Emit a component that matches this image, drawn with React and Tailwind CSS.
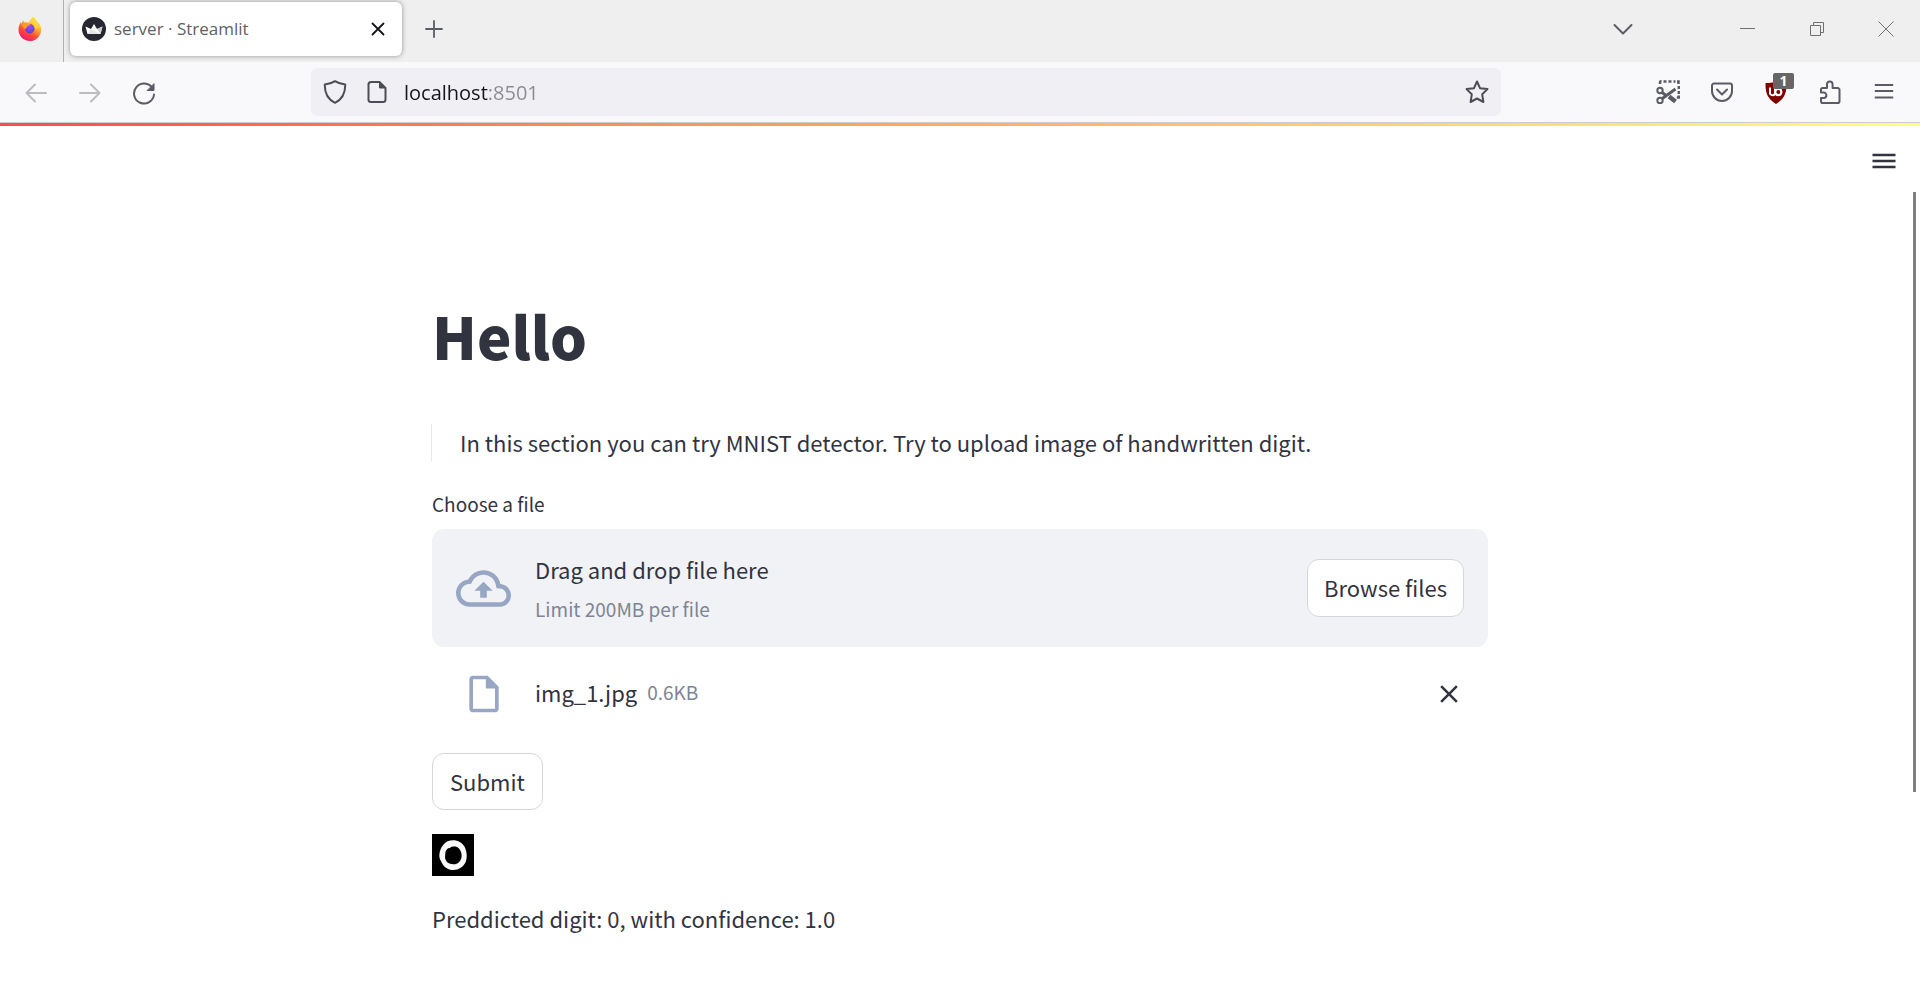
import React from "react";
import { MdOutlineCloudUpload, MdOutlineInsertDriveFile, MdClose } from "react-icons/md";

function FirefoxLogo() {
  return (
    <svg className="h-6 w-6" viewBox="0 0 24 24" aria-hidden="true">
      <defs>
        <linearGradient id="ff-body" x1="0.8" y1="0.1" x2="0.3" y2="1">
          <stop offset="0" stopColor="#fff044" />
          <stop offset="0.35" stopColor="#ffa930" />
          <stop offset="0.65" stopColor="#ff4a3c" />
          <stop offset="1" stopColor="#f5156c" />
        </linearGradient>
        <radialGradient id="ff-globe" cx="0.5" cy="0.3" r="0.7">
          <stop offset="0" stopColor="#a04cf5" />
          <stop offset="1" stopColor="#5b3fd0" />
        </radialGradient>
      </defs>
      <path fill="url(#ff-body)" d="M15.2 0c1.700 1.200 2.700 2.700 3.300 4.100c3 1.800 4.700 5 4.700 8.500A11.400 11.400 0 0 1 11.800 24C5.500 24 .5 19 .5 12.800c0-3 .8-5.600 2.500-7.800l.5 2C4.200 5 4.600 4 5 3.200c.4 1 .9 1.700 1.700 2.300 1.600-.4 3-.2 4.300.2C11.400 3.300 13.300 1.400 15.200 0z" />
      <circle cx="11.8" cy="11.7" r="4.7" fill="url(#ff-globe)" />
      <path fill="#ff9a2b" d="M4 7.500c2-1.600 4.500-1.900 6.500-.9l2 .9c-1 1.200-2.300 1.500-3.200 1.800-.5 1.300-1.200 2.200-2.700 2.700-1.200-1.400-2-3-2.600-4.500z" />
      <path fill="#ffd43d" opacity=".8" d="M15.200 0c3.300 2.400 3.700 6.400 5.300 9.200-.7 2-1.600 2.800-3.700 1.900-.2-3.200-2.600-5.200-4.600-6.200.3-2 1.500-3.800 3-4.900z" />
    </svg>
  );
}

function CrownLogo() {
  return (
    <svg className="h-6 w-6" viewBox="0 0 24 24" aria-hidden="true">
      <circle cx="12" cy="12" r="12" fill="#262730" />
      <path fill="#fff" d="M3.5 9.500 9 12l3-5 3 5 5.500-2.500L18.500 17h-13z" />
      <path fill="#c9c9cc" d="M12 7l3 5 5.500-2.500L18.500 17z" />
      <path fill="#e4e4e6" d="M9 12l9.500 5h-13z" />
    </svg>
  );
}

function Line({ children, className = "h-6 w-6", width = 2 }) {
  return (
    <svg className={className} viewBox="0 0 24 24" fill="none" stroke="currentColor" strokeWidth={width} strokeLinecap="round" strokeLinejoin="round" aria-hidden="true">
      {children}
    </svg>
  );
}

function IconButton({ label, children, className = "text-[#5b5b66]" }) {
  return (
    <button type="button" aria-label={label} className={`flex h-12 w-[54px] items-center justify-center ${className}`}>
      {children}
    </button>
  );
}

function TabBar() {
  return (
    <header className="flex h-[62px] bg-[#efefef]">
      <div className="flex w-16 items-center justify-center border-r border-[#b0b0b3] pb-1 pr-1">
        <FirefoxLogo />
      </div>
      <div className="flex flex-1 items-center pb-1">
        <div className="ml-1.5 flex h-[54px] w-[332px] items-center rounded-md bg-white px-3 shadow-[0_0_5px_rgba(0,0,0,0.4)]">
          <CrownLogo />
          <span className="ml-2 flex-1 text-[17px] text-[#5f5f66]">server · Streamlit</span>
          <button type="button" aria-label="Close tab" className="flex h-6 w-6 items-center justify-center text-[#15141a]">
            <Line width={1.8}><path d="M6.500 6.500l11 11M17.500 6.500l-11 11" /></Line>
          </button>
        </div>
        <button type="button" aria-label="New tab" className="ml-5 flex h-6 w-6 items-center justify-center text-[#5b5b66]">
          <Line width={1.8}><path d="M12 4v16M4 12h16" /></Line>
        </button>
        <button type="button" aria-label="List all tabs" className="ml-auto mr-[63px] flex h-12 w-[54px] items-center justify-center text-[#5b5b66]">
          <Line><path d="M3.500 8l8.500 8.500L20.500 8" /></Line>
        </button>
        <div className="flex text-[#707070]">
          <button type="button" aria-label="Minimize" className="flex h-12 w-[69px] items-center justify-center">
            <svg className="h-4 w-4" viewBox="0 0 16 16" fill="none" stroke="currentColor" aria-hidden="true"><path d="M0 7.500h15" /></svg>
          </button>
          <button type="button" aria-label="Restore" className="flex h-12 w-[69px] items-center justify-center">
            <svg className="h-4 w-4" viewBox="0 0 16 16" fill="none" stroke="currentColor" aria-hidden="true"><path d="M1.500 4.500h10v10h-10zM4.500 4.500v-3h10v10h-3" /></svg>
          </button>
          <button type="button" aria-label="Close window" className="flex h-12 w-[69px] items-center justify-center">
            <svg className="h-4 w-4" viewBox="0 0 16 16" fill="none" stroke="currentColor" aria-hidden="true"><path d="M.5.5l15 15M15.500.5l-15 15" /></svg>
          </button>
        </div>
      </div>
    </header>
  );
}

function Toolbar() {
  return (
    <nav className="flex h-[61px] items-center border-b border-[#cccccf] bg-[#f9f9fb] px-[9px]" aria-label="Browser toolbar">
      <div className="flex pt-0.5">
        <IconButton label="Back" className="text-[#bcbcc0]">
          <Line><path d="M22 12H2.500M11 3.500L2.500 12l8.500 8.500" /></Line>
        </IconButton>
        <IconButton label="Forward" className="text-[#bcbcc0]">
          <Line><path d="M2 12h19.500M13 3.500l8.500 8.500-8.500 8.500" /></Line>
        </IconButton>
        <IconButton label="Reload">
          <Line><path d="M20.500 7.200A10 10 0 1 0 22 13.500" /><path d="M22 3v6.500h-6.500z" fill="currentColor" strokeWidth="1" /></Line>
        </IconButton>
      </div>
      <div className="mx-[140px] flex h-12 flex-1 items-center rounded-md bg-[#f0f0f4] px-3 text-[#4c4c55]">
        <Line><path d="M12 1.200C9 3.200 5.500 4.200 1.800 4.600c-.2 7.600 2.200 14.200 10.200 18.200 8-4 10.400-10.600 10.200-18.200C18.500 4.200 15 3.200 12 1.200z" /></Line>
        <Line className="ml-[18px] h-6 w-6"><path d="M14.500 2H6a2.500 2.500 0 0 0-2.500 2.500v15A2.500 2.500 0 0 0 6 22h12a2.500 2.500 0 0 0 2.500-2.500V8z" /><path d="M14.500 2v6h6z" fill="currentColor" strokeWidth="1" /></Line>
        <input
          aria-label="Address"
          type="text"
          defaultValue="localhost:8501"
          className="ml-[15px] h-8 flex-1 bg-linear-to-r from-[#15141a] from-[84px] to-[#8a8a90] to-[84px] bg-clip-text pt-0.5 text-[20px] leading-8 text-transparent outline-none"
        />
        <button type="button" aria-label="Bookmark this page" className="flex h-6 w-6 items-center justify-center">
          <Line><path d="M12 1.500l3 6.700 7.500.9-5.300 5.200 1.200 7.700L12 18.500 5.600 22l1.200-7.700L1.500 9.100 9 8.200z" /></Line>
        </button>
      </div>
      <div className="flex">
        <IconButton label="Screenshot">
          <svg className="h-6 w-6" viewBox="0 0 24 24" fill="none" stroke="currentColor" strokeWidth="2" aria-hidden="true">
            <path d="M4 4V2.500A1.500 1.500 0 0 1 5.500 1M7.500 1.500h3M12.500 1.500h3M17.500 1.500h2M21 1.500h1.500V4M22.800 6v3M22.800 11v3M22.800 15.500v2h-2" strokeWidth="2.5" />
            <circle cx="4" cy="10.5" r="2.7" /><circle cx="4" cy="20.5" r="2.7" />
            <path d="M6 12.500l5 3.500M6.300 18.500L19.500 9" strokeWidth="3" /><path d="M13 16.500l6.500 5" strokeWidth="4.5" />
          </svg>
        </IconButton>
        <IconButton label="Save to Pocket">
          <Line><path d="M4 3.500h16a2 2 0 0 1 2 2v5.500a10 10 0 0 1-20 0V5.500a2 2 0 0 1 2-2z" /><path d="M7 9.500l5 5 5-5" /></Line>
        </IconButton>
        <div className="relative">
          <IconButton label="uBlock Origin, 1 blocked">
            <svg className="h-6 w-6" viewBox="0 0 24 24" aria-hidden="true">
              <path fill="#800000" d="M12 1.500c3 1.200 6.500 1.500 10.500 1.500 0 9-1 15-10.500 21C2.500 18 1.500 12 1.500 3c4 0 7.500-.3 10.500-1.500z" />
              <path d="M6 7.500v4.500a2.500 2.500 0 0 0 5 1.200M11 7.500v4.500a3.200 3.200 0 1 0 3.200-3.200" fill="none" stroke="#fff" strokeWidth="1.9" />
              <circle cx="14.4" cy="12" r="3" fill="none" stroke="#fff" strokeWidth="1.8" />
            </svg>
          </IconButton>
          <span aria-hidden="true" className="absolute left-6 top-[5px] h-4 w-[21px] rounded-xs bg-[#666] text-center text-[14px] font-bold leading-4 text-white">1</span>
        </div>
        <IconButton label="Extensions">
          <Line><path d="M3 11V9.500A1.500 1.500 0 0 1 4.500 8H9V4.300a2.800 2.800 0 0 1 5.600 0V8h5A1.900 1.900 0 0 1 21.500 10v11.200A1.800 1.800 0 0 1 19.700 23H4.800A1.800 1.800 0 0 1 3 21.200V18h2.700a2.700 2.700 0 0 0 0-5.400H3z" /></Line>
        </IconButton>
        <IconButton label="Open application menu">
          <Line width={1.8}><path d="M3.500 5h17M3.500 11h17M3.500 17.500h17" /></Line>
        </IconButton>
      </div>
    </nav>
  );
}

function Uploader() {
  return (
    <section className="mt-[26px]">
      <label htmlFor="upload" className="block text-[19px] leading-8">Choose a file</label>
      <div className="mt-[9px] flex h-[118px] items-center rounded-xl bg-[#f0f2f6] px-6">
        <MdOutlineCloudUpload className="h-[55px] w-[55px] text-[#97a6c3]" aria-hidden="true" />
        <div className="ml-6 flex-1 pt-0.5">
          <p className="leading-10">Drag and drop file here</p>
          <p className="text-[19px] leading-10 text-[#808495]">Limit 200MB per file</p>
        </div>
        <input id="upload" type="file" className="sr-only" />
        <button type="button" className="h-[58px] rounded-xl border border-[#d6d6d9] bg-white px-4 pb-0.5">Browse files</button>
      </div>
      <div className="flex h-[94px] items-center px-6">
        <div className="flex w-[55px] justify-center">
          <MdOutlineInsertDriveFile className="h-11 w-11 text-[#97a6c3]" aria-hidden="true" />
        </div>
        <span className="ml-6 pb-1">img_1.jpg</span>
        <span className="ml-[10px] pb-1 text-[19px] text-[#808495]">0.6KB</span>
        <button type="button" aria-label="Remove img_1.jpg" className="ml-auto">
          <MdClose className="h-[30px] w-[30px]" aria-hidden="true" />
        </button>
      </div>
    </section>
  );
}

function DigitPreview() {
  return (
    <svg className="mt-6 block h-[42px] w-[42px] bg-black" viewBox="0 0 42 42" role="img" aria-label="Handwritten digit">
      <defs><filter id="soften"><feGaussianBlur stdDeviation="0.6" /></filter></defs>
      <path filter="url(#soften)" fill="#fafafa" fillRule="evenodd" d="M21 6.200c5 0 10 2.500 12.300 8 1.700 4.500 2 9.500.5 13.500C31.500 33 26.500 35.800 21.500 36c-4.500 0-8.500-1.800-11-6C8.800 27 7.200 24.500 7.300 21.500c.2-3.500 1.200-7.500 4-10.800C13.800 7.500 17 6.200 21 6.200zM21 12.500l-2 .5-1 1-2 .2c-1.800 1.500-2.800 3.200-2.700 5.800l-.3 4c.7 2.600 2.200 4.600 4.500 5.600 2.700 1 5.300.9 7.700-.2 2.700-1.400 4.200-4 4.400-7 .2-3.200-.8-5.800-2.600-7.900-1.700-1.700-3.200-2.200-6-2z" />
    </svg>
  );
}

export default function App() {
  return (
    <div className="min-h-screen bg-white font-['Open_Sans','Noto_Sans',sans-serif]">
      <TabBar />
      <Toolbar />
      <div className="relative font-['Noto_Sans_CJK_JP','Noto_Sans',sans-serif] text-[22px] text-[#31333f]">
        <div className="h-[3px] bg-linear-to-r from-[#ff4b4b] to-[#fffd80]" />
        <div className="flex justify-end px-[22px] pt-[23px]">
          <button type="button" aria-label="Main menu" className="flex h-6 w-7 items-center justify-center">
            <svg className="h-6 w-6" viewBox="0 0 24 24" stroke="currentColor" strokeWidth="2.4" aria-hidden="true"><path d="M.5 6h23M.5 12h23M.5 18h23" /></svg>
          </button>
        </div>
        <div aria-hidden="true" className="absolute right-1 top-[69px] h-[600px] w-[3px] bg-[#808080]" />
        <main className="mx-auto w-full max-w-[1058px] px-px pt-[122px]">
          <h1 className="text-[58px] font-black leading-[80px]">Hello</h1>
          <blockquote className="-ml-px mt-[49px] border-l border-[#e6e9ef] pb-0.5 pl-7 leading-9">
            In this section you can try MNIST detector. Try to upload image of handwritten digit.
          </blockquote>
          <Uploader />
          <button type="button" className="mt-3 block h-[57px] rounded-xl border border-[#d6d6d9] bg-white px-[17px]">Submit</button>
          <DigitPreview />
          <p className="mt-[22px] leading-10">Preddicted digit: 0, with confidence: 1.0</p>
        </main>
      </div>
    </div>
  );
}
